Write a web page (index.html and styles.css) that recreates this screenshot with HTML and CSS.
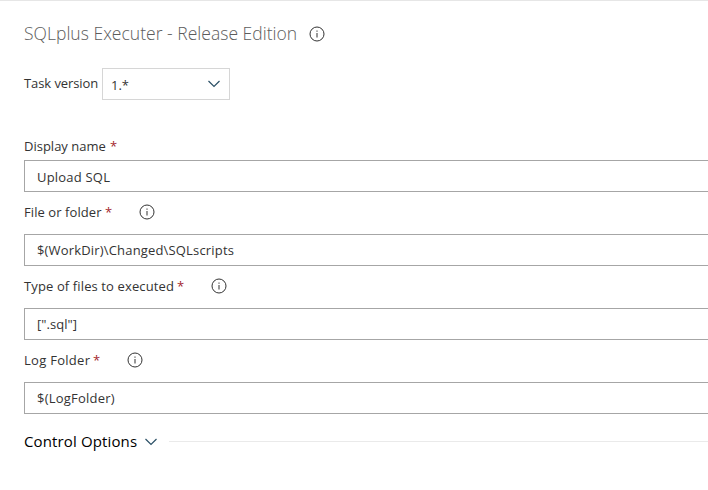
FILE: index.html
```html
<!DOCTYPE html>
<html lang="en">
<head>
<meta charset="utf-8">
<title>SQLplus Executer</title>
<link rel="stylesheet" href="styles.css">
</head>
<body>
<svg class="defs" width="0" height="0">
  <symbol id="info" viewBox="0 0 16 16"><circle cx="8" cy="8" r="7" fill="none" stroke="currentColor"/><path d="M7.5 4.5h1v1.2h-1zM7.5 7h1v4.6h-1z" fill="currentColor"/></symbol>
  <symbol id="chevron" viewBox="0 0 14 8"><path d="M1.5 1L7 6.5 12.5 1" fill="none" stroke="currentColor" stroke-width="1.2"/></symbol>
</svg>
<main class="panel">
  <header class="title-row">
    <h1 class="title">SQLplus Executer - Release Edition</h1>
    <svg class="info"><use href="#info"/></svg>
  </header>
  <div class="version-row">
    <span class="version-label">Task version</span>
    <div class="select"><span>1.*</span><svg class="chevron select-chevron"><use href="#chevron"/></svg></div>
  </div>
  <section class="field">
    <div class="label-row first"><span class="label name">Display name</span><span class="required">*</span></div>
    <div class="input first-input"><span class="v-upload">Upload SQL</span></div>
  </section>
  <section class="field">
    <div class="label-row"><span class="label file">File or folder</span><span class="required">*</span><svg class="info"><use href="#info"/></svg></div>
    <div class="input"><span class="v-path">$(WorkDir)\Changed\SQLscripts</span></div>
  </section>
  <section class="field">
    <div class="label-row"><span class="label type">Type of files to executed</span><span class="required">*</span><svg class="info"><use href="#info"/></svg></div>
    <div class="input"><span class="v-ext">[".sql"]</span></div>
  </section>
  <section class="field">
    <div class="label-row"><span class="label log">Log Folder</span><span class="required">*</span><svg class="info"><use href="#info"/></svg></div>
    <div class="input"><span class="v-log">$(LogFolder)</span></div>
  </section>
  <div class="control-row"><span class="control">Control Options</span><svg class="chevron"><use href="#chevron"/></svg><span class="rule"></span></div>
</main>
</body>
</html>
```

FILE: styles.css
```css
* { box-sizing: border-box; }
body {
  margin: 0;
  height: 490px;
  overflow: hidden;
  background: #fff;
  border-top: 1px solid #e6e6e6;
  color: #333;
  font: 13px/20px "Open Sans", "Noto Sans", sans-serif;
  white-space: nowrap;
}
.defs { position: absolute; }
.panel { padding: 13px 0 0 24px; }
.title-row { display: flex; align-items: center; height: 40px; }
.title {
  margin: 0;
  width: 285px;
  padding-bottom: 2px;
  color: #5c5c5c;
  font-size: 17.5px;
  font-weight: 300;
  line-height: 24px;
  letter-spacing: 0.02px;
}
.info { width: 16px; height: 16px; flex: none; color: #333; }
.version-row { display: flex; margin-top: 14px; height: 32px; }
.version-label { width: 78px; line-height: 31px; letter-spacing: -0.08px; }
.select {
  display: flex;
  align-items: center;
  justify-content: space-between;
  width: 128px;
  height: 32px;
  padding: 1px 8px 0 8px;
  border: 1px solid #d6d6d6;
}
.chevron { width: 14px; height: 8px; flex: none; color: #2b5066; }
.select-chevron { margin-top: -2px; }
.version-row + .field { margin-top: 32px; }
.label-row { display: flex; align-items: center; height: 42px; padding-bottom: 2px; }
.label-row.first { height: 28px; padding: 0; }
.name { width: 83px; }
.file { width: 78px; letter-spacing: 0.08px; }
.type { width: 150px; letter-spacing: 0.12px; }
.log { width: 66px; letter-spacing: 0.28px; }
.required { width: 6px; margin-left: 3px; color: #a4262c; }
.label-row .info { margin-left: 28px; }
.input {
  display: flex;
  align-items: center;
  height: 32px;
  padding: 0 0 0 12px;
  border: 1px solid #a6a6a6;
  border-right: 0;
}
.first-input { padding-top: 2px; }
.v-upload { letter-spacing: 0.2px; }
.v-path { letter-spacing: 0.17px; }
.v-ext { letter-spacing: 0.03px; }
.v-log { letter-spacing: 0.22px; }
.control-row { display: flex; align-items: center; height: 55px; color: #000; font-size: 15px; }
.control { width: 120px; padding-bottom: 2px; letter-spacing: 0.13px; }
.rule { flex: 1; height: 1px; margin-left: 11px; background: #eaeaea; }
```
